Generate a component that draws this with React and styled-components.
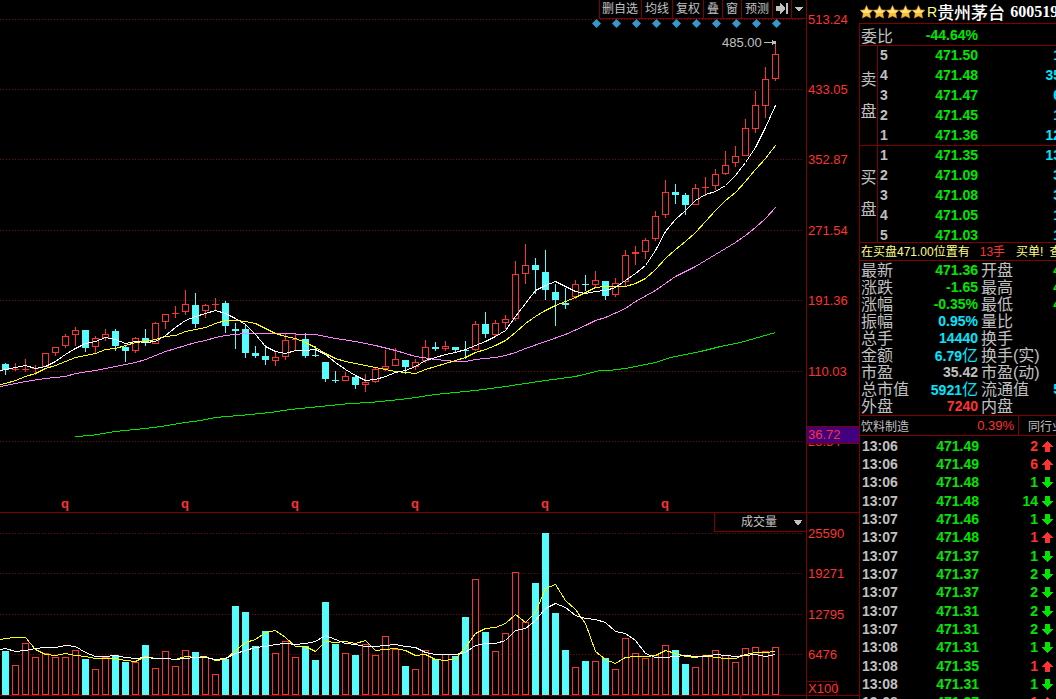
import React from 'react';
import styled, { createGlobalStyle } from 'styled-components';

const colors = {
  line: '#800000',
  red: '#ff3232',
  green: '#00e600',
  cyan: '#54fcfc',
  aqua: '#00e6ff',
  text: '#c0c0c0',
  yellow: '#ffff00',
  violet: '#ff80ff',
  purple: '#400080',
};

const sans = "'Liberation Sans', 'Noto Sans CJK SC', sans-serif";

const GlobalStyle = createGlobalStyle`
  * {
    box-sizing: border-box;
  }

  body {
    margin: 0;
    background: #000;
    color: ${colors.text};
    font-family: ${sans};
  }
`;

// [direction, high, body top, body bottom, low]
const CANDLES = [
  ['d', 363, 364, 370, 375], ['u', 363, 369, 370, 371], ['u', 359, 369, 370, 372], ['u', 365, 368, 369, 375],
  ['u', 353, 353, 367, 367], ['u', 347, 347, 353, 356], ['u', 334, 336, 346, 348], ['u', 327, 330, 335, 346],
  ['d', 330, 330, 348, 352], ['u', 336, 338, 347, 353], ['u', 329, 334, 338, 341], ['d', 329, 331, 346, 351],
  ['d', 346, 347, 351, 362], ['u', 337, 338, 351, 353], ['d', 329, 338, 343, 346], ['u', 322, 323, 344, 344],
  ['u', 314, 314, 322, 329], ['u', 306, 313, 314, 318], ['u', 290, 304, 312, 315], ['d', 293, 305, 324, 328],
  ['u', 304, 305, 311, 318], ['u', 298, 304, 305, 310], ['d', 301, 303, 326, 333], ['d', 323, 329, 331, 349],
  ['d', 324, 329, 353, 358], ['d', 346, 353, 356, 358], ['d', 345, 356, 360, 365], ['u', 351, 357, 361, 366],
  ['u', 334, 340, 357, 360], ['u', 333, 339, 340, 351], ['d', 333, 339, 356, 358], ['d', 346, 355, 356, 357],
  ['d', 362, 362, 379, 382], ['d', 371, 380, 381, 383], ['u', 372, 376, 381, 381], ['d', 375, 377, 385, 389],
  ['u', 374, 382, 385, 392], ['u', 368, 369, 382, 383], ['u', 350, 366, 369, 371], ['u', 348, 359, 366, 366],
  ['d', 360, 360, 367, 374], ['u', 359, 362, 367, 370], ['u', 340, 347, 361, 363], ['d', 342, 347, 349, 351],
  ['u', 341, 346, 349, 351], ['d', 347, 347, 350, 352], ['d', 341, 350, 351, 359], ['u', 321, 324, 350, 351],
  ['d', 312, 324, 334, 338], ['u', 320, 323, 335, 336], ['u', 315, 319, 323, 329], ['u', 261, 274, 319, 321],
  ['u', 244, 265, 274, 284], ['d', 258, 265, 270, 294], ['d', 250, 272, 290, 300], ['d', 284, 292, 300, 326],
  ['d', 288, 303, 305, 309], ['u', 280, 284, 297, 299], ['d', 275, 284, 285, 291], ['u', 271, 280, 285, 288],
  ['d', 281, 281, 296, 300], ['u', 278, 283, 295, 297], ['u', 250, 255, 282, 287], ['u', 246, 252, 254, 265],
  ['u', 238, 240, 252, 259], ['u', 211, 216, 239, 241], ['u', 180, 192, 215, 218], ['d', 184, 192, 195, 204],
  ['d', 193, 195, 205, 215], ['u', 184, 188, 205, 205], ['u', 177, 187, 188, 196], ['u', 169, 174, 186, 190],
  ['u', 151, 165, 174, 175], ['u', 146, 156, 163, 167], ['u', 119, 128, 156, 156], ['u', 91, 105, 129, 133],
  ['u', 67, 79, 106, 118], ['u', 43, 54, 79, 81],
];

const VOLUME_TOPS = [
  651, 665, 643, 657, 653, 657, 657, 650, 659, 669, 657, 655, 662, 662, 645, 668, 651, 666, 650, 652,
  657, 674, 659, 606, 612, 646, 631, 653, 641, 657, 646, 660, 602, 644, 653, 655, 644, 655, 636, 649,
  666, 669, 650, 659, 654, 656, 617, 579, 632, 651, 633, 572, 622, 583, 533, 613, 650, 667, 661, 661,
  658, 669, 638, 653, 658, 655, 645, 650, 664, 667, 655, 650, 655, 662, 648, 647, 651, 647,
];

// moving averages with one value for each candle, starting at the left edge
const MA_FAST = [
  370, 369, 367, 365, 368, 366, 361, 354, 348, 343, 341, 337, 339, 343, 341, 342, 341, 335, 327, 320, 316,
  313, 310, 313, 318, 324, 334, 346, 351, 353, 350, 350, 349, 354, 362, 369, 375, 380, 379, 376, 372, 370,
  366, 360, 357, 354, 352, 349, 345, 341, 336, 330, 316, 303, 290, 285, 281, 286, 291, 293, 291, 290, 287,
  280, 273, 265, 250, 231, 219, 210, 200, 194, 191, 185, 175, 162, 147, 127, 105,
];

const MA_MID = [
  384, 383, 380, 376, 373, 368, 365, 361, 357, 355, 353, 349, 348, 345, 342, 341, 339, 336, 335, 331, 329,
  327, 323, 320, 320, 321, 323, 328, 333, 336, 338, 342, 347, 353, 358, 361, 363, 365, 367, 369, 371, 372,
  373, 369, 366, 363, 360, 357, 352, 349, 345, 340, 332, 323, 316, 310, 305, 301, 297, 292, 287, 286, 286,
  286, 283, 278, 269, 258, 249, 241, 232, 221, 210, 200, 192, 181, 169, 158, 145,
];

const VOL_FAST = [
  639, 638, 637, 637, 649, 654, 655, 653, 655, 656, 658, 658, 658, 660, 661, 656, 658, 658, 659, 656, 657,
  656, 660, 659, 650, 642, 639, 632, 630, 637, 646, 646, 651, 641, 642, 641, 643, 640, 650, 649, 648, 650,
  655, 654, 659, 660, 658, 647, 633, 628, 627, 623, 614, 622, 612, 588, 584, 600, 609, 623, 651, 659, 663,
  657, 656, 656, 655, 650, 653, 656, 657, 655, 657, 658, 658, 654, 652, 652, 651,
];

const VOL_SLOW = [
  649, 648, 651, 650, 648, 647, 647, 645, 646, 652, 656, 656, 655, 657, 658, 657, 658, 658, 659, 658, 657,
  657, 659, 658, 653, 650, 647, 646, 644, 643, 644, 643, 641, 635, 639, 643, 644, 646, 646, 645, 644, 646,
  647, 652, 654, 654, 654, 652, 645, 643, 643, 640, 630, 628, 620, 608, 603, 607, 615, 618, 619, 622, 631,
  633, 640, 653, 657, 657, 656, 655, 656, 656, 654, 655, 656, 655, 654, 656, 654,
];

const MA_SLOW = '0,386 15,383 25,381 45,378 65,376 75,373 95,370 115,366 135,362 145,359 165,351 185,345 195,342 205,340 215,337 225,335 245,333 285,333 305,334 315,334 325,336 335,338 355,341 375,345 395,350 405,353 415,356 435,359 455,361 465,361 475,359 495,357 505,355 515,352 525,348 545,341 565,334 585,325 595,320 605,317 625,308 635,301 655,290 675,276 695,266 715,254 735,242 745,235 755,227 765,218 775,207';
const MA_LONG = '75,436 90,435 115,431 145,428 160,426 185,422 200,420 215,417 250,414 270,412 290,409 320,406 350,403 370,402 400,399 415,397 435,394 475,390 505,386 525,383 545,380 575,376 600,370 608,370 625,368 640,365 655,362 670,357 700,351 720,346 740,342 775,332';

const PRICE_TICKS = [
  [19, '513.24'], [89, '433.05'], [159, '352.87'], [230, '271.54'], [300, '191.36'], [371, '110.03'], [441, '28.84'],
];
const VOLUME_TICKS = [[533, '25590'], [573, '19271'], [614, '12795'], [654, '6476']];

const SELLS = [
  ['5', '471.50', '1'], ['4', '471.48', '35'], ['3', '471.47', '6'], ['2', '471.45', '1'], ['1', '471.36', '12'],
];
const BUYS = [
  ['1', '471.35', '13'], ['2', '471.09', '3'], ['3', '471.08', '3'], ['4', '471.05', '1'], ['5', '471.03', '1'],
];

const STATS = [
  { label: '最新', value: '471.36', color: colors.green, label2: '开盘', value2: '4' },
  { label: '涨跌', value: '-1.65', color: colors.green, label2: '最高', value2: '4' },
  { label: '涨幅', value: '-0.35%', color: colors.green, label2: '最低', value2: '4' },
  { label: '振幅', value: '0.95%', color: colors.aqua, label2: '量比' },
  { label: '总手', value: '14440', color: colors.aqua, label2: '换手' },
  { label: '金额', value: '6.79', unit: '亿', color: colors.aqua, label2: '换手(实)' },
  { label: '市盈', value: '35.42', color: colors.text, label2: '市盈(动)' },
  { label: '总市值', value: '5921', unit: '亿', color: colors.aqua, label2: '流通值', value2: '5' },
  { label: '外盘', value: '7240', color: colors.red, label2: '内盘' },
];

const TRADES = [
  ['13:06', '471.49', 2, 'up'], ['13:06', '471.49', 6, 'up'], ['13:06', '471.48', 1, 'down'],
  ['13:07', '471.48', 14, 'down'], ['13:07', '471.46', 1, 'down'], ['13:07', '471.48', 1, 'up'],
  ['13:07', '471.37', 1, 'down'], ['13:07', '471.37', 2, 'down'], ['13:07', '471.37', 2, 'down'],
  ['13:07', '471.31', 2, 'down'], ['13:07', '471.31', 2, 'down'], ['13:08', '471.31', 1, 'down'],
  ['13:08', '471.35', 1, 'up'], ['13:08', '471.31', 1, 'down'], ['13:08', '471.37', 1, 'up'],
];

const Screen = styled.div`
  display: grid;
  grid-template-columns: minmax(0, 1fr) 197px;
  height: 100vh;
  overflow: hidden;
`;

const Charts = styled.main`
  display: flex;
  flex-direction: column;
  min-width: 0;
`;

const ChartRow = styled.div`
  display: grid;
  grid-template-columns: minmax(0, 1fr) 53px;
  flex-grow: ${props => (props.$grow ? 1 : 0)};
  border-bottom: ${props => (props.$line ? `1px solid ${colors.line}` : 'none')};
`;

const Plot = styled.div`
  display: flex;
  justify-content: flex-end;
  overflow: hidden;
`;

const Axis = styled.div`
  border-left: 1px solid ${colors.line};
`;

const Drawing = styled.svg`
  display: block;
  flex-shrink: 0;
  overflow: visible;
  font-family: ${sans};
  font-size: 13px;
`;

const Toolbar = styled.div`
  display: flex;
  height: 19px;
  border-bottom: 1px solid ${colors.line};
`;

const ToolButton = styled.button`
  display: flex;
  align-items: center;
  justify-content: center;
  padding: 0 3px;
  border: 0;
  border-left: 1px solid ${colors.line};
  background: none;
  color: ${colors.text};
  font: 12px/18px ${sans};
  cursor: pointer;

  &:first-child {
    padding: 0 3px 0 2px;
  }
`;

const IndicatorPicker = styled.label`
  display: flex;
  align-items: center;
  width: 92px;
  height: 19px;
  padding: 0 3px 0 26px;
  border: solid ${colors.line};
  border-width: 0 0 1px 1px;
`;

const IndicatorSelect = styled.select`
  flex: 1;
  min-width: 0;
  padding: 0;
  border: 0;
  appearance: none;
  background: none;
  color: ${colors.text};
  font: 12px/18px ${sans};
`;

const FooterTick = styled.div`
  width: 66px;
  border-left: 1px solid ${colors.line};
`;

const Side = styled.aside`
  display: flex;
  flex-direction: column;
  overflow: hidden;
`;

const StockTitle = styled.header`
  display: flex;
  flex-shrink: 0;
  align-items: center;
  height: 23px;
  padding-left: 1px;
  white-space: nowrap;

  svg {
    flex-shrink: 0;
  }
`;

const Flag = styled.span`
  margin-left: 2px;
  color: #ffff80;
  font-size: 14px;
`;

const StockName = styled.h1`
  margin: 0;
  color: #fff;
  font: 500 17px/22px 'Noto Sans CJK SC', sans-serif;
`;

const StockCode = styled.span`
  margin-left: 5px;
  color: #fff;
  font: bold 16px/22px 'Liberation Serif', serif;
`;

const Quote = styled.div`
  flex: 1;
  border: solid ${colors.line};
  border-width: 1px 0 0 1px;
`;

const Table = styled.table`
  width: 201px;
  margin-top: ${props => (props.$spaced ? '1px' : '0')};
  table-layout: fixed;
  border-spacing: 0;

  td,
  th {
    padding: 0;
    font-size: 14px;
    line-height: 15px;
    white-space: nowrap;
  }
`;

const RatioRow = styled.div`
  display: flex;
  justify-content: space-between;
  align-items: center;
  width: 118px;
  height: 21px;
  padding-left: 1px;
  font-size: 16px;
`;

const Amount = styled.b`
  color: ${props => props.$color};
  font-size: 14px;
`;

const BookRow = styled.tr`
  height: 20px;

  &:first-child td,
  &:first-child th {
    border-top: 1px solid ${colors.line};
  }

  tbody:last-child > &:last-child {
    height: 17px;
  }

  tbody:last-child > &:last-child td {
    padding-top: 3px;
    line-height: 14px;
  }
`;

const SideLabel = styled.th`
  border-right: 1px solid ${colors.line};

  span {
    display: block;
    font-size: 16px;
    font-weight: 400;
    line-height: 32px;
  }
`;

const Cell = styled.td`
  color: ${props => props.$color || colors.text};
  font-weight: bold;
  text-align: ${props => props.$align || 'right'};

  &:nth-of-type(1) {
    padding-left: ${props => (props.$align === 'left' ? '2px' : '0')};
  }
`;

const Ticker = styled.div`
  display: flex;
  height: 19px;
  padding-left: 1px;
  border: solid ${colors.line};
  border-width: 1px 0;
  color: #ffff80;
  font-size: 12px;
  line-height: 18px;
  white-space: nowrap;
`;

const TickerPart = styled.span`
  margin-right: ${props => props.$gap}px;
  color: ${props => props.$color || 'inherit'};
`;

const StatRow = styled.tr`
  height: 17px;
`;

const StatLabel = styled.th`
  && {
    padding-left: ${props => props.$pad}px;
    font-size: 16px;
    font-weight: 400;
    line-height: 17px;
    text-align: left;
  }
`;

const Unit = styled.span`
  font-size: 16px;
  font-weight: 400;
`;

const Industry = styled.div`
  display: flex;
  height: 21px;
  padding-left: 1px;
  border: solid ${colors.line};
  border-width: 1px 0;
  font-size: 12px;
  line-height: 22px;
  white-space: nowrap;
`;

const IndustryName = styled.span`
  flex: 0 0 51px;
`;

const IndustryChange = styled.span`
  flex: 0 0 107px;
  padding-right: 4px;
  border-right: 1px solid ${colors.line};
  color: ${colors.red};
  font-size: 13px;
  line-height: 20px;
  text-align: right;
`;

const IndustryPeers = styled.span`
  padding-left: 9px;
`;

const TradeRow = styled.tr`
  height: 18px;

  &:nth-child(3n) {
    height: 19px;
  }
`;

const ArrowCell = styled.td`
  && {
    padding-left: 4px;
    line-height: 0;
  }
`;

const Star = () => (
  <svg width="13" height="14" viewBox="0 0 13 14" aria-hidden="true">
    <path
      d="M6.500 .4 8.500 4.700 12.900 5.200 9.800 8.300 10.600 13.100 6.500 11 2.400 13.100 3.200 8.300 .1 5.200 4.500 4.700Z"
      fill="#fbbf35"
      stroke="#e09a25"
      strokeWidth=".5"
    />
    <path d="M6.500 1.800 7.900 5.500 11.500 5.900 9 7.800 4.200 8 1.500 5.900 5.100 5.500Z" fill="#ffe58c" />
  </svg>
);

const TradeArrow = ({ dir }) => (
  <svg width="11" height="11" viewBox="0 0 11 11" shapeRendering="crispEdges" role="img" aria-label={dir}>
    {dir === 'up' ? (
      <path d="M5 0h1v1h1v1h1v1h1v1h1v1h1v1H8v5H3V6H0V5h1V4h1V3h1V2h1V1h1z" fill={colors.red} />
    ) : (
      <path d="M3 0h5v5h3v1h-1v1H9v1H8v1H7v1H6v1H5v-1H4V9H3V8H2V7H1V6H0V5h3z" fill={colors.green} />
    )}
  </svg>
);

const toPoints = (values) =>
  values.map((y, i) => `${i === 0 ? 0 : i * 10 - 5},${y}`).join(' ');

const Curve = ({ points, color }) => (
  <polyline points={points} fill="none" stroke={color} shapeRendering="crispEdges" transform="translate(.5 .5)" />
);

const GridLines = ({ ticks }) => (
  <g stroke={colors.line} strokeDasharray="1 2" transform="translate(0 .5)">
    {ticks.map(([y]) => (
      <line key={y} x1="-1998" x2="804" y1={y} y2={y} />
    ))}
  </g>
);

const Body = ({ x, top, bottom, up }) => (
  <rect
    x={x - 2.5}
    y={top + 0.5}
    width="6"
    height={bottom - top - 1}
    fill={up ? '#000' : colors.cyan}
    stroke={up ? colors.red : colors.cyan}
  />
);

const PriceChart = () => (
  <Drawing width="806" height="493" viewBox="0 19 806 493" role="img" aria-label="日K线">
    <GridLines ticks={PRICE_TICKS} />
    {CANDLES.map(([dir, high, top, bottom, low], i) => {
      const x = i * 10 + 5;
      const up = dir === 'u';
      return (
        <g key={x}>
          <rect x={x} y={high} width="1" height={low - high} fill={up ? colors.red : colors.cyan} />
          {bottom - top < 2 ? (
            <rect x={x - 3} y={top} width="7" height="1" fill={up ? colors.red : colors.cyan} />
          ) : (
            <Body x={x} top={top} bottom={bottom} up={up} />
          )}
        </g>
      );
    })}
    <Curve points={MA_LONG} color={colors.green} />
    <Curve points={MA_SLOW} color={colors.violet} />
    <Curve points={toPoints(MA_MID)} color={colors.yellow} />
    <Curve points={toPoints(MA_FAST)} color="#fff" />
    {[596, 616, 636, 656, 676, 696, 716, 736, 756, 776].map(x => (
      <path key={x} d={`M${x - 4} 23.5 ${x + 0.5} 19 ${x + 5} 23.5 ${x + 0.5} 28Z`} fill="#3399cc" />
    ))}
    <text x="722" y="47" fill={colors.text}>485.00</text>
    <path d="M764 42h8v-2h1v1h3v3h-3v1h-1v-2h-8z" fill={colors.text} />
    <g fill={colors.red} fontWeight="bold" fontSize="13" textAnchor="middle">
      {[65, 185, 295, 415, 545, 665].map(x => (
        <text key={x} x={x} y="508">q</text>
      ))}
    </g>
  </Drawing>
);

const VolumeChart = () => (
  <Drawing width="806" height="163" viewBox="0 532 806 163" role="img" aria-label="成交量">
    <GridLines ticks={VOLUME_TICKS} />
    {VOLUME_TOPS.map((top, i) => (
      <Body key={i} x={i * 10 + 5} top={top} bottom={695} up={CANDLES[i][0] === 'u'} />
    ))}
    <Curve points={toPoints(VOL_FAST)} color={colors.yellow} />
    <Curve points={toPoints(VOL_SLOW)} color="#fff" />
  </Drawing>
);

const Labels = ({ ticks }) =>
  ticks.map(([y, text]) => (
    <text key={y} x="1" y={y + 5} fill={colors.red}>{text}</text>
  ));

const BookSide = ({ labels, rows }) => (
  <tbody>
    {rows.map(([level, price, amount], i) => (
      <BookRow key={level}>
        {i === 0 && (
          <SideLabel rowSpan={5} scope="rowgroup">
            {labels.map(label => <span key={label}>{label}</span>)}
          </SideLabel>
        )}
        <Cell $align="left">{level}</Cell>
        <Cell $color={colors.green}>{price}</Cell>
        <Cell $color={colors.aqua}>{amount}</Cell>
      </BookRow>
    ))}
  </tbody>
);

const App = () => (
  <Screen>
    <GlobalStyle />
    <Charts>
      <ChartRow>
        <Plot>
          <Toolbar>
            {['删自选', '均线', '复权', '叠', '窗', '预测'].map(name => (
              <ToolButton key={name} type="button">{name}</ToolButton>
            ))}
            <ToolButton type="button" aria-label="跳到最新">
              <svg width="12" height="12" viewBox="0 0 12 12" shapeRendering="crispEdges">
                <path d="M0 3h4V0h1l4 5v1l-4 5H4V8H0zM10 0h2v11h-2z" fill={colors.text} />
              </svg>
            </ToolButton>
            <ToolButton type="button" aria-label="更多">
              <svg width="8" height="4" viewBox="0 0 8 4" shapeRendering="crispEdges">
                <path d="M0 0h8v1H7v1H6v1H5v1H3V3H2V2H1V1H0z" fill={colors.text} />
              </svg>
            </ToolButton>
          </Toolbar>
        </Plot>
        <Axis />
      </ChartRow>
      <ChartRow $line>
        <Plot>
          <PriceChart />
        </Plot>
        <Axis>
          <Drawing width="52" height="493" viewBox="0 19 52 493">
            <Labels ticks={PRICE_TICKS} />
            <rect y="426" width="52" height="18" fill={colors.line} />
            <rect y="427" width="52" height="16" fill={colors.purple} />
            <Labels ticks={[[434, '36.72']]} />
          </Drawing>
        </Axis>
      </ChartRow>
      <ChartRow>
        <Plot>
          <IndicatorPicker>
            <IndicatorSelect aria-label="指标">
              <option>成交量</option>
            </IndicatorSelect>
            <svg width="9" height="5" viewBox="0 0 9 5" shapeRendering="crispEdges">
              <path d="M0 0h8v1H7v2H6v1H5v1H3V4H2V3H1V1H0z" fill={colors.text} />
            </svg>
          </IndicatorPicker>
        </Plot>
        <Axis />
      </ChartRow>
      <ChartRow $line>
        <Plot>
          <VolumeChart />
        </Plot>
        <Axis>
          <Drawing width="52" height="163" viewBox="0 532 52 163">
            <Labels ticks={VOLUME_TICKS} />
            <path d="M0 681.500H29.500V695" fill="none" stroke={colors.line} />
            <Labels ticks={[[688, 'X100']]} />
          </Drawing>
        </Axis>
      </ChartRow>
      <ChartRow $grow>
        <Plot>
          <FooterTick />
        </Plot>
        <Axis />
      </ChartRow>
    </Charts>

    <Side>
      <StockTitle>
        {[1, 2, 3, 4, 5].map(n => <Star key={n} />)}
        <Flag>R</Flag>
        <StockName>贵州茅台</StockName>
        <StockCode>600519</StockCode>
      </StockTitle>
      <Quote>
        <RatioRow>
          <span>委比</span>
          <Amount $color={colors.green}>-44.64%</Amount>
        </RatioRow>
        <Table>
          <colgroup>
            <col width="18" />
            <col width="16" />
            <col width="84" />
            <col />
          </colgroup>
          <BookSide labels={['卖', '盘']} rows={SELLS} />
          <BookSide labels={['买', '盘']} rows={BUYS} />
        </Table>
        <Ticker>
          <TickerPart $gap={10}>在买盘471.00位置有</TickerPart>
          <TickerPart $gap={11} $color={colors.red}>13手</TickerPart>
          <TickerPart $gap={6}>买单!</TickerPart>
          <TickerPart $gap={0}>查</TickerPart>
        </Ticker>
        <Table $spaced>
          <colgroup>
            <col width="50" />
            <col width="68" />
            <col width="60" />
            <col />
          </colgroup>
          <tbody>
            {STATS.map(row => (
              <StatRow key={row.label}>
                <StatLabel $pad={1} scope="row">{row.label}</StatLabel>
                <Cell $color={row.color}>
                  {row.value}
                  {row.unit && <Unit>{row.unit}</Unit>}
                </Cell>
                <StatLabel $pad={3} scope="row">{row.label2}</StatLabel>
                <Cell $color={row.value2 === '5' ? colors.aqua : colors.green}>{row.value2}</Cell>
              </StatRow>
            ))}
          </tbody>
        </Table>
        <Industry>
          <IndustryName>饮料制造</IndustryName>
          <IndustryChange>0.39%</IndustryChange>
          <IndustryPeers>同行业</IndustryPeers>
        </Industry>
        <Table $spaced>
          <colgroup>
            <col width="50" />
            <col width="69" />
            <col width="59" />
            <col />
          </colgroup>
          <tbody>
            {TRADES.map(([time, price, amount, dir], i) => (
              <TradeRow key={i}>
                <Cell $align="left">{time}</Cell>
                <Cell $color={colors.green}>{price}</Cell>
                <Cell $color={dir === 'up' ? colors.red : colors.green}>{amount}</Cell>
                <ArrowCell>
                  <TradeArrow dir={dir} />
                </ArrowCell>
              </TradeRow>
            ))}
          </tbody>
        </Table>
      </Quote>
    </Side>
  </Screen>
);

export default App;
